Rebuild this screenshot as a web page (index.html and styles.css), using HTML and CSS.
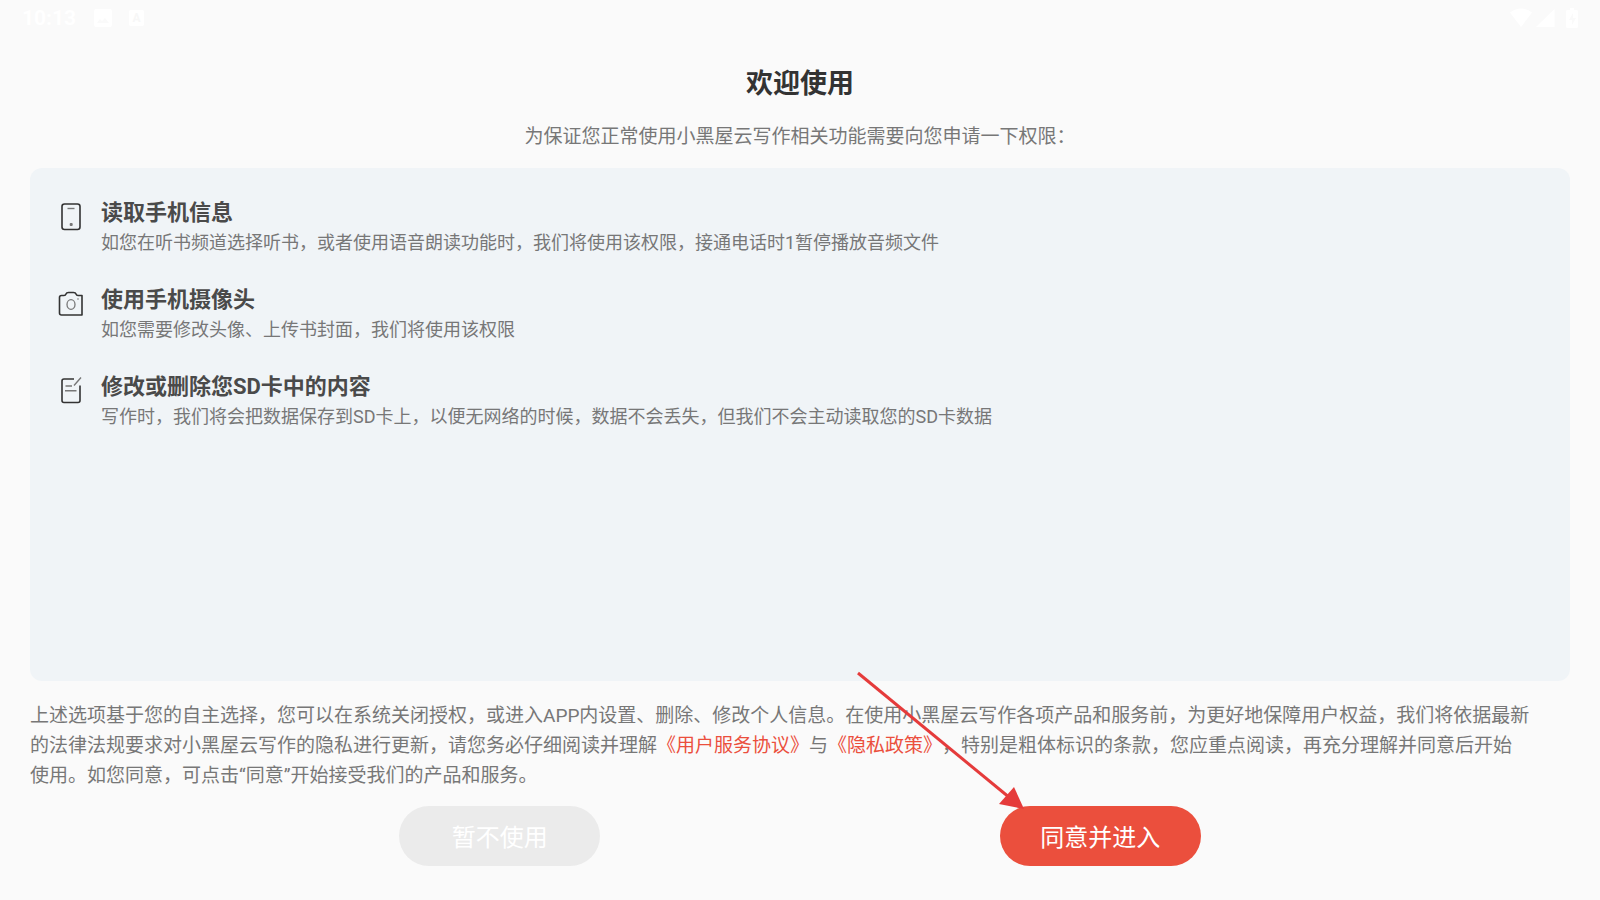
FILE: index.html
```html
<!DOCTYPE html>
<html lang="zh-CN">
<head>
<meta charset="utf-8">
<meta name="viewport" content="width=device-width, initial-scale=1">
<title>欢迎使用</title>
<link rel="stylesheet" href="styles.css">
</head>
<body>
<div class="screen">
  <header class="status">
    <div class="status-left">
      <span class="clock">10:13</span>
      <svg class="picture" viewBox="0 0 18 18" width="18" height="18" aria-hidden="true"><path fill="#fff" fill-rule="evenodd" d="M2 0h14a2 2 0 0 1 2 2v14a2 2 0 0 1-2 2H2a2 2 0 0 1-2-2V2a2 2 0 0 1 2-2zM3 14h12l-4-5-3 3-2-2z"/></svg>
      <span class="keyboard">A</span>
    </div>
    <div class="status-right">
      <svg viewBox="0 0 24 20" width="24" height="20" aria-hidden="true"><path fill="#fff" d="M1 4.500Q12-3.500 23 4.500L12 19z"/></svg>
      <svg viewBox="0 0 19 20" width="19" height="20" aria-hidden="true"><path fill="#fff" d="M18.500 1v18H0z"/></svg>
      <svg class="battery" viewBox="0 0 12 20" width="12" height="20" aria-hidden="true"><path fill="#fff" fill-rule="evenodd" d="M4 0h4v2h3l1 1v16l-1 1H1l-1-1V3l1-1h3zM7 5l-4 7h3v5l4-7H7z"/></svg>
    </div>
  </header>

  <main class="content">
    <h1 class="title">欢迎使用</h1>
    <p class="subtitle">为保证您正常使用小黑屋云写作相关功能需要向您申请一下权限：</p>

    <ul class="panel">
      <li class="item">
        <svg class="icon" viewBox="0 0 26 30" width="26" height="30" fill="none" aria-hidden="true"><rect x="4" y="2" width="18" height="25.500" rx="2.500" stroke="#333" stroke-width="1.600"/><path d="M9.500 6.500h7" stroke="#777" stroke-width="1.400"/><rect x="11.700" y="21" width="3" height="3" rx="1" fill="#777"/></svg>
        <div>
          <h2 class="item-title">读取手机信息</h2>
          <p class="item-text">如您在听书频道选择听书，或者使用语音朗读功能时，我们将使用该权限，接通电话时1暂停播放音频文件</p>
        </div>
      </li>
      <li class="item">
        <svg class="icon" viewBox="0 0 26 30" width="26" height="30" fill="none" aria-hidden="true"><path d="M24 6.500V26H3.500Q1.500 26 1.500 24V8.500Q1.500 6.500 3.500 6.500H6Q7.500 6.500 8 5Q8.500 3.500 10.500 3.500h5Q17.500 3.500 18 5Q18.500 6.500 20 6.500z" stroke="#333" stroke-width="1.600" stroke-linejoin="round"/><ellipse cx="13" cy="15.500" rx="4" ry="4.800" stroke="#777" stroke-width="1.300"/><circle cx="20" cy="10" r=".8" fill="#777"/></svg>
        <div>
          <h2 class="item-title">使用手机摄像头</h2>
          <p class="item-text">如您需要修改头像、上传书封面，我们将使用该权限</p>
        </div>
      </li>
      <li class="item">
        <svg class="icon" viewBox="0 0 26 30" width="26" height="30" fill="none" aria-hidden="true"><path d="M16 3H6Q4 3 4 5v19.500Q4 26.500 6 26.500h14Q22 26.500 22 24.500V9.500" stroke="#333" stroke-width="1.600"/><path d="M16 9.500l7-8M7.500 10H14M7 14.800h11.500" stroke="#777" stroke-width="1.400"/></svg>
        <div>
          <h2 class="item-title">修改或删除您SD卡中的内容</h2>
          <p class="item-text">写作时，我们将会把数据保存到SD卡上，以便无网络的时候，数据不会丢失，但我们不会主动读取您的SD卡数据</p>
        </div>
      </li>
    </ul>

    <p class="terms">上述选项基于您的自主选择，您可以在系统关闭授权，或进入APP内设置、删除、修改个人信息。在使用小黑屋云写作各项产品和服务前，为更好地保障用户权益，我们将依据最新<br>的法律法规要求对小黑屋云写作的隐私进行更新，请您务必仔细阅读并理解<a href="#service">《用户服务协议》</a>与<a href="#privacy">《隐私政策》</a>，特别是粗体标识的条款，您应重点阅读，再充分理解并同意后开始<br>使用。如您同意，可点击“同意”开始接受我们的产品和服务。</p>

    <div class="actions">
      <button class="button" type="button">暂不使用</button>
      <div class="agree">
        <button class="button button-primary" type="button">同意并进入</button>
        <svg class="arrow" viewBox="0 0 172 142" width="172" height="142" aria-hidden="true"><path d="M3 3l152 125" stroke="#e53b3b" stroke-width="3"/><path d="M169 139l-25-5 15-17z" fill="#e53b3b"/></svg>
      </div>
    </div>
  </main>
</div>
</body>
</html>
```
FILE: styles.css
```css
* {
  box-sizing: border-box;
  margin: 0;
  padding: 0;
}

body {
  background: #fafafa;
  color: #777;
  font-family: Roboto, "Noto Sans CJK SC", sans-serif;
  text-spacing-trim: space-all;
}

.screen {
  display: flex;
  flex-direction: column;
  min-height: 100vh;
}

.status {
  display: flex;
  justify-content: space-between;
  align-items: center;
  height: 36px;
  padding: 0 22px;
  color: #fff;
}

.status-left,
.status-right {
  display: flex;
  align-items: center;
}

.status-right {
  gap: 3px;
}

.battery {
  margin-left: 8px;
}

.clock {
  font-size: 21px;
  font-weight: 700;
}

.picture {
  margin: 0 17px 0 18px;
}

.keyboard {
  width: 15px;
  height: 16px;
  border-radius: 2px;
  background: #fff;
  color: #f7f7f7;
  font-size: 12px;
  font-weight: 700;
  line-height: 16px;
  text-align: center;
}

.content {
  display: flex;
  flex: 1;
  flex-direction: column;
  padding: 28px 30px 34px;
}

.title {
  color: #333;
  font-size: 27px;
  font-weight: 700;
  line-height: 40px;
  text-align: center;
}

.subtitle {
  margin: 18px 0 16px;
  font-size: 19px;
  line-height: 30px;
  text-align: center;
}

.panel {
  display: flex;
  flex: 1;
  flex-direction: column;
  gap: 27px;
  padding: 29px 28px;
  border-radius: 12px;
  background: #f0f4f7;
  list-style: none;
}

.item {
  display: flex;
  align-items: flex-start;
  gap: 17px;
}

.icon {
  flex: none;
  margin-top: 5px;
}

.item-title {
  color: #4a4a4a;
  font-size: 22px;
  font-weight: 700;
  line-height: 32px;
}

.item-text {
  font-size: 18px;
  line-height: 28px;
}

.terms {
  margin: 20px 0 15px;
  font-size: 19px;
  line-height: 30px;
}

.terms a {
  color: #eb4f3d;
  text-decoration: none;
}

.actions {
  display: flex;
  justify-content: space-around;
  width: 78%;
  margin: 0 auto;
}

.agree {
  position: relative;
}

.button {
  width: 201px;
  height: 60px;
  padding-top: 4px;
  border: 0;
  border-radius: 30px;
  background: #ebebeb;
  color: #fff;
  font-family: inherit;
  font-size: 24px;
  line-height: 56px;
}

.button-primary {
  background: #eb4f3d;
}

.arrow {
  position: absolute;
  top: -136px;
  left: -145px;
  pointer-events: none;
}
```
